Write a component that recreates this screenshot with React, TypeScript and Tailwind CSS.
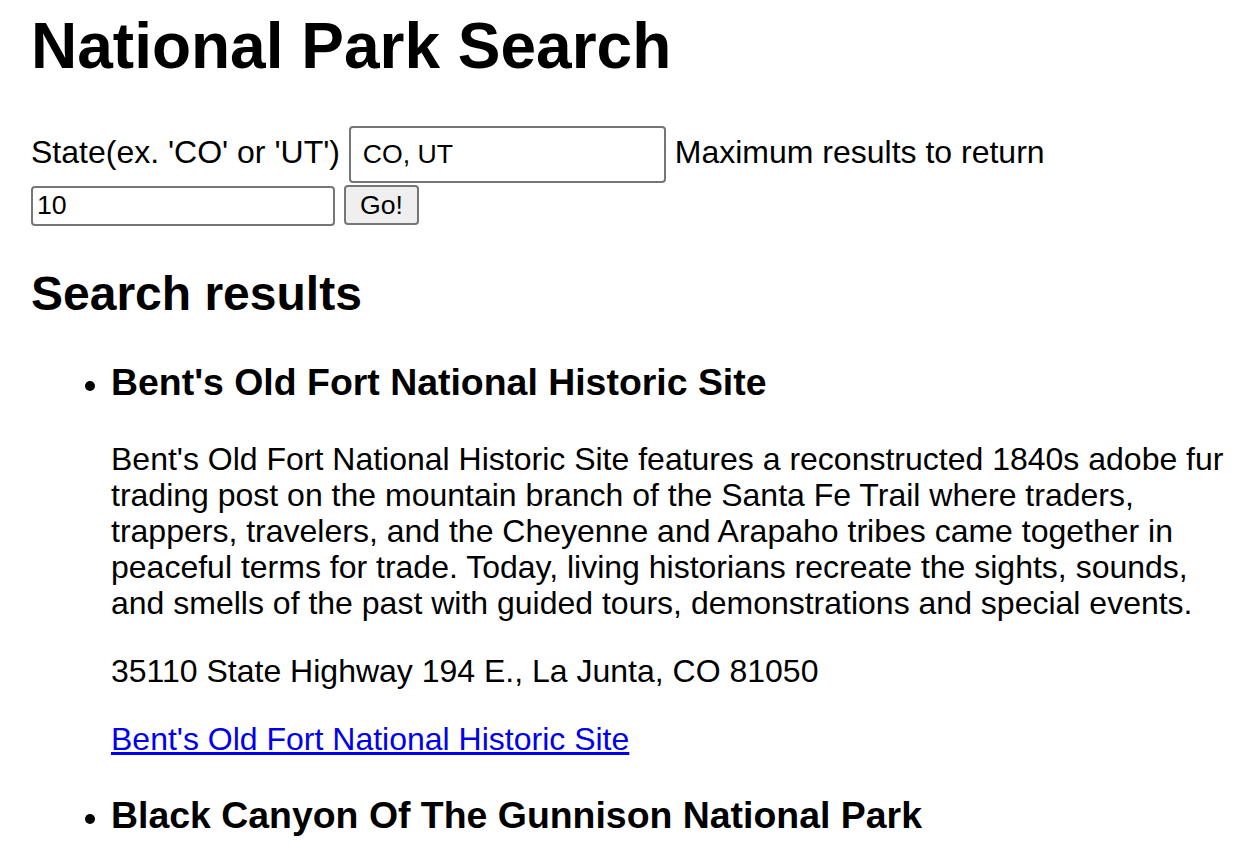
type Park = {
  name: string;
  description: string;
  address: string;
};

const parks: Park[] = [
  {
    name: "Bent's Old Fort National Historic Site",
    description:
      "Bent's Old Fort National Historic Site features a reconstructed 1840s adobe fur trading post on the mountain branch of the Santa Fe Trail where traders, trappers, travelers, and the Cheyenne and Arapaho tribes came together in peaceful terms for trade. Today, living historians recreate the sights, sounds, and smells of the past with guided tours, demonstrations and special events.",
    address: "35110 State Highway 194 E., La Junta, CO 81050",
  },
  {
    name: "Black Canyon Of The Gunnison National Park",
    description:
      "Big enough to be overwhelming, still intimate enough to feel the pulse of time, Black Canyon of the Gunnison exposes you to some of the steepest cliffs, oldest rock, and craggy spires in North America.",
    address: "102 Elk Creek, Gunnison, CO 81230",
  },
];

const ParkItem = ({ park }: { park: Park }) => {
  return (
    <li>
      <h3 className="text-[37.44px] font-bold leading-[43px] mt-[37px] mb-[37px]">{park.name}</h3>
      <p className="mb-[32px]">{park.description}</p>
      <p className="mb-[32px]">{park.address}</p>
      <p className="mb-[32px]">
        <a href="#" className="text-[#0000ee] underline">
          {park.name}
        </a>
      </p>
    </li>
  );
};

export default function App() {
  return (
    <div className="min-h-[860px] bg-white pl-[31px] pr-[22px] pt-[9px] font-['Liberation_Sans',Arial,sans-serif] text-[32px] leading-[36px] text-black">
      <h1 className="text-[64px] font-bold leading-[74px] mb-[43px]">National Park Search</h1>

      <form onSubmit={(e) => e.preventDefault()}>
        <label htmlFor="state">State(ex. 'CO' or 'UT')</label>{" "}
        <input
          id="state"
          type="text"
          defaultValue="CO, UT"
          className="w-[317px] h-[57px] px-[12px] border-2 border-[#767676] rounded-[4px] text-[26.67px] text-black bg-white"
        />{" "}
        <label htmlFor="max">Maximum results to return</label>{" "}
        <input
          id="max"
          type="text"
          defaultValue="10"
          className="w-[304px] h-[40px] px-[4px] border-2 border-[#767676] rounded-[4px] text-[26.67px] text-black bg-white align-[-2px]"
        />{" "}
        <button
          type="submit"
          className="w-[75px] h-[40px] border-2 border-[#767676] rounded-[4px] bg-[#efefef] text-[26.67px] text-black align-[-2px]"
        >
          Go!
        </button>
      </form>

      <h2 className="text-[48px] font-bold leading-[55px] mt-[40px] mb-[40px]">Search results</h2>

      <ul className="list-disc pl-[80px]">
        {parks.map((park) => (
          <ParkItem key={park.name} park={park} />
        ))}
      </ul>
    </div>
  );
}
